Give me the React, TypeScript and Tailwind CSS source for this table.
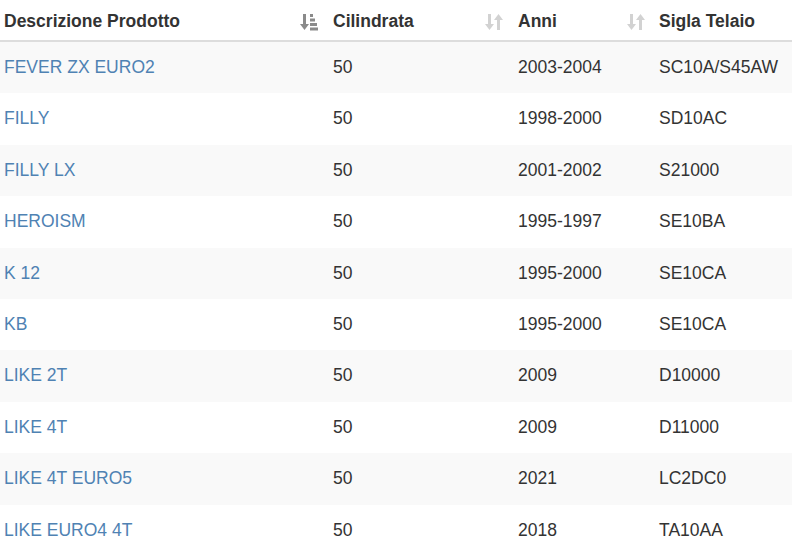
import React from "react";

const rows = [
  ["FEVER ZX EURO2", "50", "2003-2004", "SC10A/S45AW"],
  ["FILLY", "50", "1998-2000", "SD10AC"],
  ["FILLY LX", "50", "2001-2002", "S21000"],
  ["HEROISM", "50", "1995-1997", "SE10BA"],
  ["K 12", "50", "1995-2000", "SE10CA"],
  ["KB", "50", "1995-2000", "SE10CA"],
  ["LIKE 2T", "50", "2009", "D10000"],
  ["LIKE 4T", "50", "2009", "D11000"],
  ["LIKE 4T EURO5", "50", "2021", "LC2DC0"],
  ["LIKE EURO4 4T", "50", "2018", "TA10AA"],
];

function SortAsc() {
  return (
    <svg width="18" height="18" viewBox="0 0 18 18" className="shrink-0">
      <g fill="#8a8a8a">
        <rect x="3" y="1" width="3" height="11" />
        <polygon points="0,11 9,11 4.5,17" />
        <rect x="10" y="1" width="3" height="3" />
        <rect x="10" y="5.5" width="5" height="3" />
        <rect x="10" y="10" width="7" height="3" />
        <rect x="10" y="14.5" width="8" height="3" />
      </g>
    </svg>
  );
}

function SortBoth() {
  return (
    <svg width="18" height="18" viewBox="0 0 18 18" className="shrink-0">
      <g fill="#d2d2d2">
        <rect x="3" y="1" width="3" height="11" />
        <polygon points="0,11 9,11 4.5,17" />
        <rect x="12" y="6" width="3" height="11" />
        <polygon points="9,7 18,7 13.5,1" />
      </g>
    </svg>
  );
}

const cols = ["w-[325px] pl-1 pr-[7px]", "w-[185px] pl-2 pr-[7px]", "w-[141px] pl-2 pr-[6px]", "flex-1 pl-2"];

export default function App() {
  return (
    <div className="w-[792px] h-[547px] overflow-hidden bg-white text-[17.5px] text-[#333] font-['Liberation_Sans',Arial,sans-serif]">
      <div className="flex h-[42px] pt-[3px] border-b-2 border-[#ddd] font-bold">
        {["Descrizione Prodotto", "Cilindrata", "Anni", "Sigla Telaio"].map((h, i) => (
          <div key={h} className={`${cols[i]} flex items-center justify-between`}>
            <span>{h}</span>
            {i === 0 && <SortAsc />}
            {(i === 1 || i === 2) && <SortBoth />}
          </div>
        ))}
      </div>
      {rows.map((r, idx) => (
        <div key={r[0]} className={`flex h-[51.4px] pb-[1px] items-center ${idx % 2 === 0 ? "bg-[#f9f9f9]" : "bg-white"}`}>
          {r.map((c, i) => (
            <div key={i} className={`${cols[i]} ${i === 0 ? "text-[#4f82b3]" : ""}`}>
              {c}
            </div>
          ))}
        </div>
      ))}
    </div>
  );
}
